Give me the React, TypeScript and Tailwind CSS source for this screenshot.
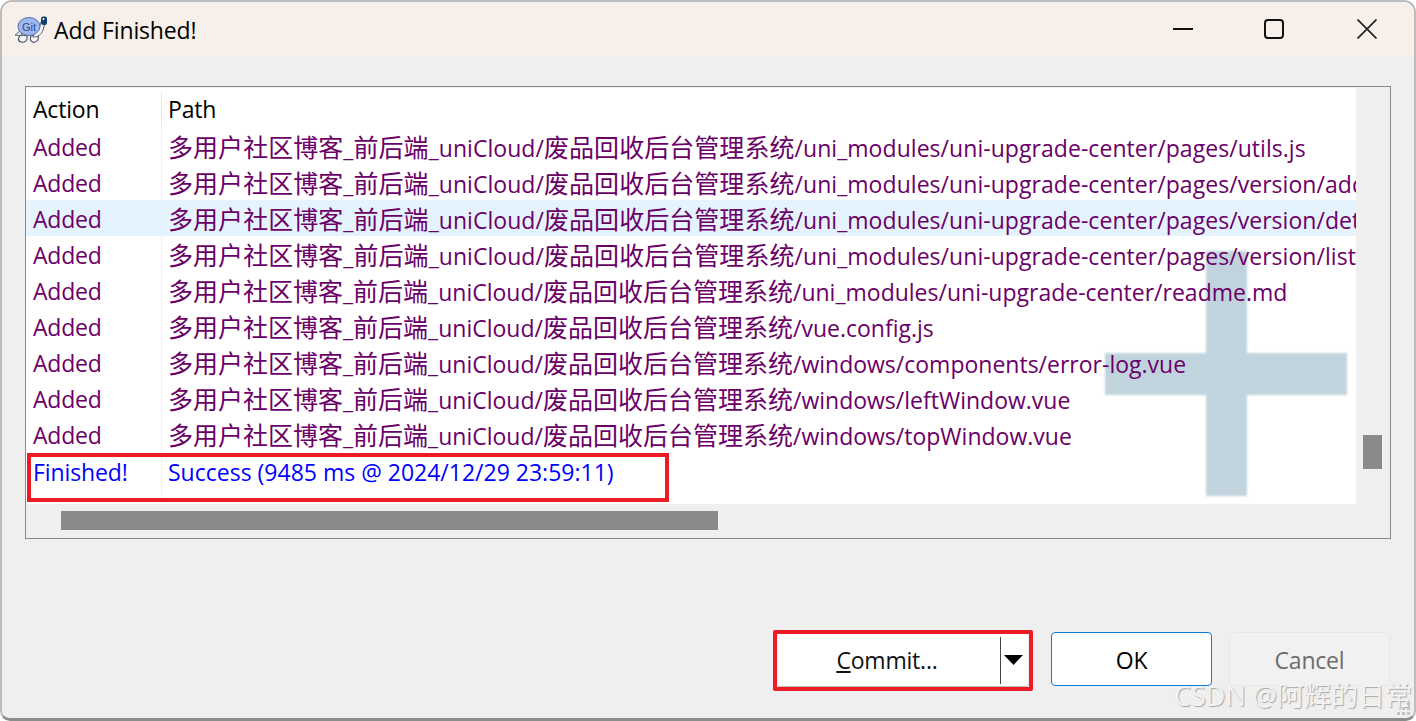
const rows: string[] = [
  "uni_modules/uni-upgrade-center/pages/utils.js",
  "uni_modules/uni-upgrade-center/pages/version/add.vue",
  "uni_modules/uni-upgrade-center/pages/version/detail.vue",
  "uni_modules/uni-upgrade-center/pages/version/list.vue",
  "uni_modules/uni-upgrade-center/readme.md",
  "vue.config.js",
  "windows/components/error-log.vue",
  "windows/leftWindow.vue",
  "windows/topWindow.vue",
];

function Turtle() {
  return (
    <svg width="34" height="28" viewBox="0 0 34 28" className="shrink-0">
      <path d="M1 19 L7 14 L8 20 Z" fill="#dfe4ee" stroke="#555d6e" strokeWidth="0.9" />
      <path d="M8 19 C4 20 3 25 7 26 C11 27 14 24 13 20 Z" fill="#f2f4f8" stroke="#4a5162" strokeWidth="1.1" />
      <path d="M17 20 C15 24 18 27 21 26 C25 25 25 21 23 19 Z" fill="#f2f4f8" stroke="#4a5162" strokeWidth="1.1" />
      <path d="M21 15 C25 14 26 10 27 6 L31 7 L29 14 C27 19 24 21 19 21 Z" fill="#f7f8fb" stroke="#4a5162" strokeWidth="0.9" />
      <ellipse cx="15" cy="10.5" rx="11" ry="9" fill="#9db8f0" stroke="#566ea6" strokeWidth="1" />
      <text x="15" y="14.5" textAnchor="middle" fontSize="11" fill="#2f4a8c" fontFamily="'Liberation Sans', sans-serif">Git</text>
      <rect x="27" y="0.5" width="6" height="8.5" rx="2.2" fill="#123f70" />
      <circle cx="29.5" cy="3" r="1" fill="#ffffff" />
    </svg>
  );
}

function Prefix() {
  return (
    <>
      <span className="text-[25px]">多用户社区博客</span>_<span className="text-[25px]">前后端</span>_uniCloud/<span className="text-[25px]">废品回收后台管理系统</span>/
    </>
  );
}

export default function App() {
  return (
    <div className="w-[1416px] h-[721px] bg-white overflow-hidden font-['Open_Sans','Noto_Sans_CJK_SC',sans-serif]">
      <div className="relative w-full h-full flex flex-col rounded-t-[12px] rounded-b-[10px] border-x-2 border-t-2 border-b-[3px] border-x-[#bdbdbd] border-t-[#bdbdbd] border-b-[#8c8c8c] bg-[#efefef] overflow-hidden">
        <div className="h-[55px] shrink-0 bg-[#f7f0ea] flex items-center pl-[12px]">
          <Turtle />
          <span className="ml-[6px] mt-[2px] text-[23px] tracking-[-0.15px] text-black">Add Finished!</span>
          <div className="ml-auto flex items-center text-black pb-[1px]">
            <svg width="20" height="20" viewBox="0 0 20 20" className="mr-[71px]">
              <path d="M0 10 H20" stroke="#111" strokeWidth="2" />
            </svg>
            <svg width="20" height="20" viewBox="0 0 20 20" className="mr-[73px]">
              <rect x="1" y="1" width="18" height="18" rx="3" fill="none" stroke="#111" strokeWidth="2" />
            </svg>
            <svg width="20" height="20" viewBox="0 0 20 20" className="mr-[37px]">
              <path d="M0.5 0.5 L19.5 19.5 M19.5 0.5 L0.5 19.5" stroke="#222" strokeWidth="1.7" />
            </svg>
          </div>
        </div>

        <div className="flex-1 flex flex-col px-[23px] pt-[29px]">
          <div className="relative h-[453px] border border-[#868b93] bg-[#efefef] flex flex-col">
            <div className="flex flex-1 min-h-0">
              <div className="relative w-[1330px] h-[416px] mt-[1px] bg-white overflow-hidden">
                <div className="absolute left-[1180px] top-[163px] w-[41px] h-[245px] bg-[#c1d4de] blur-[1px]" />
                <div className="absolute left-[1079px] top-[265px] w-[242px] h-[42px] bg-[#c1d4de] blur-[1px]" />
                <div className="relative flex flex-col">
                  <div className="flex h-[40px] pt-[3px] items-center text-black text-[23px] tracking-[-0.2px]">
                    <div className="w-[136px] h-full flex items-center pl-[7px] border-r border-[#e6e9ee]">Action</div>
                    <div className="pl-[6px]">Path</div>
                  </div>
                  {rows.map((r, i) => (
                    <div key={r} className={`flex h-[36px] items-center text-[#6b0068] text-[23px] whitespace-nowrap ${i === 2 ? "bg-[#e5f3ff]" : ""}`}>
                      <div className="w-[136px] shrink-0 h-full flex items-center pt-[3px] pl-[7px] border-r border-[#eef1f5] tracking-[-0.2px]">Added</div>
                      <div className={`pl-[6px] pt-[3px] ${r.includes("pages") ? "tracking-[0.05px]" : ""}`}><Prefix />{r}</div>
                    </div>
                  ))}
                  <div className="flex h-[50px] items-start text-[#0000ff] text-[23px] whitespace-nowrap">
                    <div className="w-[136px] h-[50px] pt-[3px] pl-[7px] border-r border-[#eef1f5] tracking-[-0.1px]">Finished!</div>
                    <div className="pl-[6px] pt-[3px]">Success (9485 ms @ 2024/12/29 23:59:11)</div>
                  </div>
                </div>
              </div>
              <div className="flex-1 relative">
                <div className="ml-[7px] mt-[348px] w-[19px] h-[34px] bg-[#8a8a8a]" />
              </div>
            </div>
            <div className="h-[34px] shrink-0 flex items-center pl-[35px] pb-[2px]">
              <div className="w-[657px] h-[19px] bg-[#8a8a8a]" />
            </div>
            <div className="absolute left-[1px] top-[366px] w-[642px] h-[49px] border-[4px] border-[#ed1c24]" />
          </div>

          <div className="flex justify-end items-start mt-[93px] mr-[1px] text-[23px] tracking-[-0.2px]">
            <div className="relative mt-[2px] w-[250px] h-[54px] bg-white border-b-2 border-[#bcbcbc] rounded-[4px] flex items-center mr-[23px]">
              <span className="w-[218px] pt-[1px] text-center text-[#111]"><span className="underline">C</span>ommit...</span>
              <div className="ml-[4px] w-px h-[47px] bg-[#444]" />
              <svg width="20" height="12" viewBox="0 0 20 12" className="ml-[3px]">
                <path d="M0 1 H19 L9.5 11 Z" fill="#000" />
              </svg>
              <div className="absolute -left-[5px] -top-[4px] w-[260px] h-[61px] border-[4px] border-[#ed1c24] rounded-[2px]" />
            </div>
            <div className="w-[161px] h-[54px] pt-[3px] bg-white border border-[#0f7bd4] rounded-[4px] flex items-center justify-center text-black mr-[17px]">OK</div>
            <div className="w-[161px] h-[54px] pt-[3px] bg-[#f1f1f1] border border-[#e8e8e8] rounded-[4px] flex items-center justify-center text-[#6c6c6c]">Cancel</div>
          </div>
        </div>

        <div className="absolute right-[2px] bottom-[9px] text-[27px] leading-none whitespace-nowrap text-[#f2f2f2] [text-shadow:1px_1px_1px_#a8a8a8]">CSDN @阿辉的日常</div>
        <svg width="14" height="14" viewBox="0 0 14 14" className="absolute right-[3px] bottom-[2px]">
          <g fill="#c4c4c4">
            <rect x="10" y="0" width="3" height="3" />
            <rect x="5" y="5" width="3" height="3" />
            <rect x="10" y="5" width="3" height="3" />
            <rect x="0" y="10" width="3" height="3" />
            <rect x="5" y="10" width="3" height="3" />
            <rect x="10" y="10" width="3" height="3" />
          </g>
        </svg>
      </div>
    </div>
  );
}
